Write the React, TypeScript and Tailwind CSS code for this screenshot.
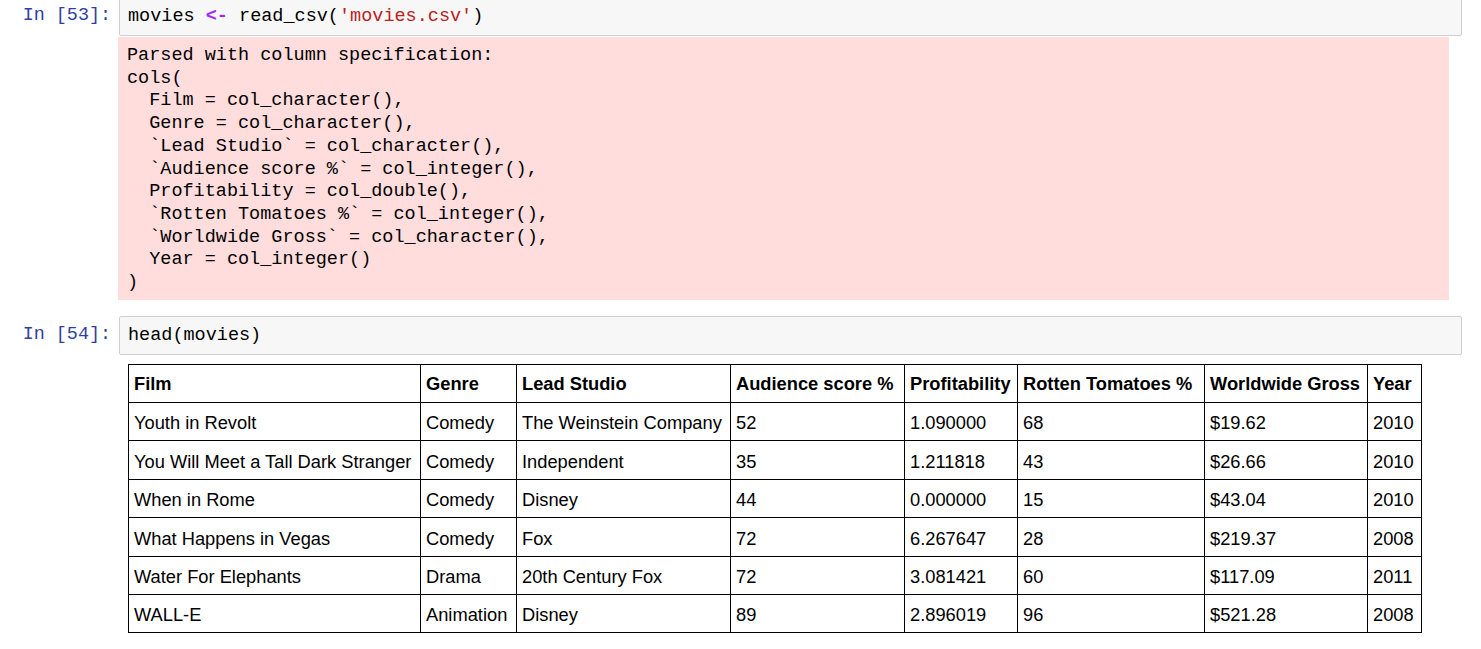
const mono = { fontFamily: '"Liberation Mono", "DejaVu Sans Mono", monospace' };

const rows = [
  ['Youth in Revolt', 'Comedy', 'The Weinstein Company', '52', '1.090000', '68', '$19.62', '2010'],
  ['You Will Meet a Tall Dark Stranger', 'Comedy', 'Independent', '35', '1.211818', '43', '$26.66', '2010'],
  ['When in Rome', 'Comedy', 'Disney', '44', '0.000000', '15', '$43.04', '2010'],
  ['What Happens in Vegas', 'Comedy', 'Fox', '72', '6.267647', '28', '$219.37', '2008'],
  ['Water For Elephants', 'Drama', '20th Century Fox', '72', '3.081421', '60', '$117.09', '2011'],
  ['WALL-E', 'Animation', 'Disney', '89', '2.896019', '96', '$521.28', '2008'],
];

const headers = [
  { label: 'Film', w: 'w-[292px]' },
  { label: 'Genre', w: 'w-[96px]' },
  { label: 'Lead Studio', w: 'w-[214px]' },
  { label: 'Audience score %', w: 'w-[174px]' },
  { label: 'Profitability', w: 'w-[113px]' },
  { label: 'Rotten Tomatoes %', w: 'w-[187px]' },
  { label: 'Worldwide Gross', w: 'w-[163px]' },
  { label: 'Year', w: 'w-[54px]' },
];

const spec = [
  'Parsed with column specification:',
  'cols(',
  '  Film = col_character(),',
  '  Genre = col_character(),',
  '  `Lead Studio` = col_character(),',
  '  `Audience score %` = col_integer(),',
  '  Profitability = col_double(),',
  '  `Rotten Tomatoes %` = col_integer(),',
  '  `Worldwide Gross` = col_character(),',
  '  Year = col_integer()',
  ')',
];

function Prompt({ n }: { n: number }) {
  return (
    <div className="w-[119px] shrink-0 pr-[8px] text-right text-[18.4px] leading-[38px] text-[#303f9f]" style={mono}>
      In [{n}]:
    </div>
  );
}

export default function App() {
  return (
    <div className="w-[1481px] h-[649px] overflow-hidden bg-white text-black">
      {/* cell 53 */}
      <div className="flex mt-[-3px]">
        <Prompt n={53} />
        <div
          className="flex-1 mr-[19px] h-[39px] border border-[#cfcfcf] rounded-[2px] bg-[#f7f7f7] pl-[8px] text-[18.5px] leading-[38px] whitespace-pre"
          style={mono}
        >
          movies <span className="text-[#aa22ff] font-bold">&lt;-</span> read_csv(
          <span className="text-[#ba2121]">'movies.csv'</span>)
        </div>
      </div>
      <div
        className="ml-[118px] mr-[32px] mt-[1px] h-[263px] bg-[#ffdddd] pl-[9px] pt-[8px] text-[18.5px] leading-[22.7px] whitespace-pre"
        style={mono}
      >
        {spec.map((l, i) => (
          <div key={i}>{l}</div>
        ))}
      </div>

      {/* cell 54 */}
      <div className="flex mt-[16px]">
        <Prompt n={54} />
        <div
          className="flex-1 mr-[19px] h-[39px] border border-[#cfcfcf] rounded-[2px] bg-[#f7f7f7] pl-[8px] text-[18.5px] leading-[37px] whitespace-pre"
          style={mono}
        >
          head(movies)
        </div>
      </div>

      <div className="ml-[128px] mt-[9px]">
        <table
          className="border-collapse table-fixed text-[18.3px] w-[1293px]"
          style={{ fontFamily: '"Liberation Sans", Arial, sans-serif' }}
        >
          <thead>
            <tr className="h-[38px]">
              {headers.map((h) => (
                <th key={h.label} className={`${h.w} border border-black px-[5px] pt-[1px] text-left font-bold whitespace-nowrap`}>
                  {h.label}
                </th>
              ))}
            </tr>
          </thead>
          <tbody>
            {rows.map((r, i) => (
              <tr key={i} className="h-[38.4px]">
                {r.map((c, j) => (
                  <td key={j} className="border border-black px-[5px] pt-[3px] text-left whitespace-nowrap">
                    {c}
                  </td>
                ))}
              </tr>
            ))}
          </tbody>
        </table>
      </div>
    </div>
  );
}
